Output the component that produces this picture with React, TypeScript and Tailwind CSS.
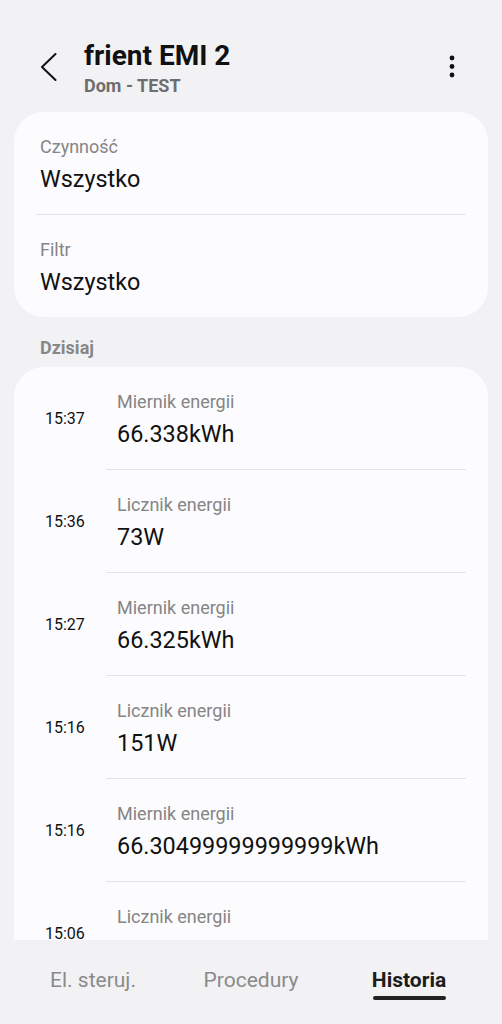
import React from 'react';

type Entry = { time: string; label: string; value: string };

const entries: Entry[] = [
    { time: '15:37', label: 'Miernik energii', value: '66.338kWh' },
    { time: '15:36', label: 'Licznik energii', value: '73W' },
    { time: '15:27', label: 'Miernik energii', value: '66.325kWh' },
    { time: '15:16', label: 'Licznik energii', value: '151W' },
    { time: '15:16', label: 'Miernik energii', value: '66.30499999999999kWh' },
    { time: '15:06', label: 'Licznik energii', value: '157W' },
];

const FilterRow: React.FC<{ label: string; value: string }> = ({ label, value }) => (
    <div className="h-[102px] flex flex-col justify-center px-[26px] pt-[4px]">
        <div className="text-[18px] leading-[26px] text-[#858585]">{label}</div>
        <div className="mt-[2px] text-[23.4px] leading-[34px] text-[#111111]">{value}</div>
    </div>
);

const HistoryRow: React.FC<{ entry: Entry }> = ({ entry }) => (
    <div className="flex">
        <div className="w-[92px] shrink-0 pl-[31px] h-[103px] flex items-center text-[16px] text-[#111111]">
            {entry.time}
        </div>
        <div className="flex-1 mr-[22px] h-[103px] border-b border-[#e4e4e6] flex flex-col justify-center pl-[11px] pt-[3px]">
            <div className="text-[18px] leading-[26px] text-[#858585]">{entry.label}</div>
            <div className="mt-[2px] text-[23.4px] leading-[34px] text-[#111111] whitespace-nowrap">{entry.value}</div>
        </div>
    </div>
);

const App: React.FC = () => {
    return (
        <div
            className="w-[502px] h-[1024px] bg-[#f2f2f4] flex flex-col overflow-hidden"
            style={{ fontFamily: 'Roboto, "Noto Sans", sans-serif' }}
        >
            {/* header */}
            <div className="h-[112px] shrink-0 flex items-start pt-[39px] pl-[40px] pr-[47px]">
                <svg width="18" height="28" viewBox="0 0 18 28" className="mt-[14px]" fill="none">
                    <polyline points="15.5,1 2,14 15.5,27" stroke="#111" strokeWidth="2" strokeLinecap="round" strokeLinejoin="round" />
                </svg>
                <div className="ml-[26px]">
                    <div className="text-[28px] leading-[34px] font-bold text-[#111111]">frient EMI 2</div>
                    <div className="mt-[1px] text-[18px] leading-[24px] font-bold text-[#6e6e6e]">Dom - TEST</div>
                </div>
                <svg width="6" height="24" viewBox="0 0 6 24" className="ml-auto mt-[16px]">
                    <circle cx="3" cy="3" r="2.4" fill="#111" />
                    <circle cx="3" cy="11.5" r="2.4" fill="#111" />
                    <circle cx="3" cy="20" r="2.4" fill="#111" />
                </svg>
            </div>

            {/* filters */}
            <div className="mx-[14px] bg-[#fcfcfe] rounded-[30px] shrink-0">
                <FilterRow label="Czynność" value="Wszystko" />
                <div className="mx-[22px] h-px bg-[#e4e4e6]" />
                <FilterRow label="Filtr" value="Wszystko" />
            </div>

            <div className="mt-[19px] pl-[40px] text-[18px] leading-[24px] font-bold text-[#878787] shrink-0">Dzisiaj</div>

            {/* history list */}
            <div className="mt-[7px] mx-[14px] flex-1 bg-[#fcfcfe] rounded-t-[30px] overflow-hidden">
                {entries.map((e, i) => (
                    <HistoryRow key={i} entry={e} />
                ))}
            </div>

            {/* bottom tabs */}
            <div className="h-[84px] shrink-0 grid grid-cols-3 px-[14px] pt-[26px]">
                <div className="flex flex-col items-center">
                    <span className="text-[21px] leading-[28px] text-[#8a8a8a]">El. steruj.</span>
                </div>
                <div className="flex flex-col items-center">
                    <span className="text-[21px] leading-[28px] text-[#8a8a8a]">Procedury</span>
                </div>
                <div className="flex flex-col items-center">
                    <span className="text-[21px] leading-[28px] font-bold text-[#1c1c1c]">Historia</span>
                    <div className="mt-[2px] h-[3.5px] w-[73px] rounded-full bg-[#222222]" />
                </div>
            </div>
        </div>
    );
};

export default App;
